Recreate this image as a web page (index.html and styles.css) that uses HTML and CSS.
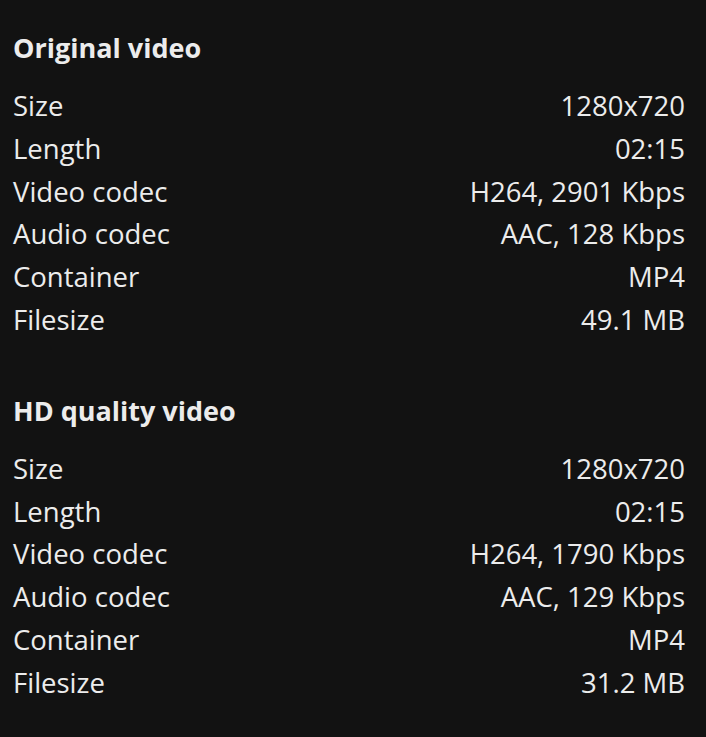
FILE: index.html
```html
<!DOCTYPE html>
<html>
<head>
<meta charset="utf-8">
<link rel="stylesheet" href="styles.css">
</head>
<body>
<main class="page">
  <section class="group">
    <h2 class="group-title">Original video</h2>
    <div class="row"><span class="label">Size</span><span class="value">1280x720</span></div>
    <div class="row"><span class="label">Length</span><span class="value">02:15</span></div>
    <div class="row"><span class="label">Video codec</span><span class="value">H264, 2901 Kbps</span></div>
    <div class="row"><span class="label">Audio codec</span><span class="value">AAC, 128 Kbps</span></div>
    <div class="row"><span class="label">Container</span><span class="value">MP4</span></div>
    <div class="row"><span class="label">Filesize</span><span class="value">49.1 MB</span></div>
  </section>
  <section class="group">
    <h2 class="group-title">HD quality video</h2>
    <div class="row"><span class="label">Size</span><span class="value">1280x720</span></div>
    <div class="row"><span class="label">Length</span><span class="value">02:15</span></div>
    <div class="row"><span class="label">Video codec</span><span class="value">H264, 1790 Kbps</span></div>
    <div class="row"><span class="label">Audio codec</span><span class="value">AAC, 129 Kbps</span></div>
    <div class="row"><span class="label">Container</span><span class="value">MP4</span></div>
    <div class="row"><span class="label">Filesize</span><span class="value">31.2 MB</span></div>
  </section>
</main>
</body>
</html>
```
FILE: styles.css
```css
html, body {
  margin: 0;
  background: #121212;
}
body {
  font-family: "Open Sans", "Noto Sans", sans-serif;
  color: #ececec;
  width: 706px;
  height: 737px;
  overflow: hidden;
}
.page {
  padding: 27px 21px 0 13px;
  display: flex;
  flex-direction: column;
  gap: 48px;
}
.group {
  display: flex;
  flex-direction: column;
}
.group-title {
  margin: 0 0 16px;
  font-size: 27px;
  font-weight: 700;
  line-height: 42px;
}
.row {
  display: flex;
  justify-content: space-between;
  font-size: 27.5px;
  line-height: 42.8px;
}
```
